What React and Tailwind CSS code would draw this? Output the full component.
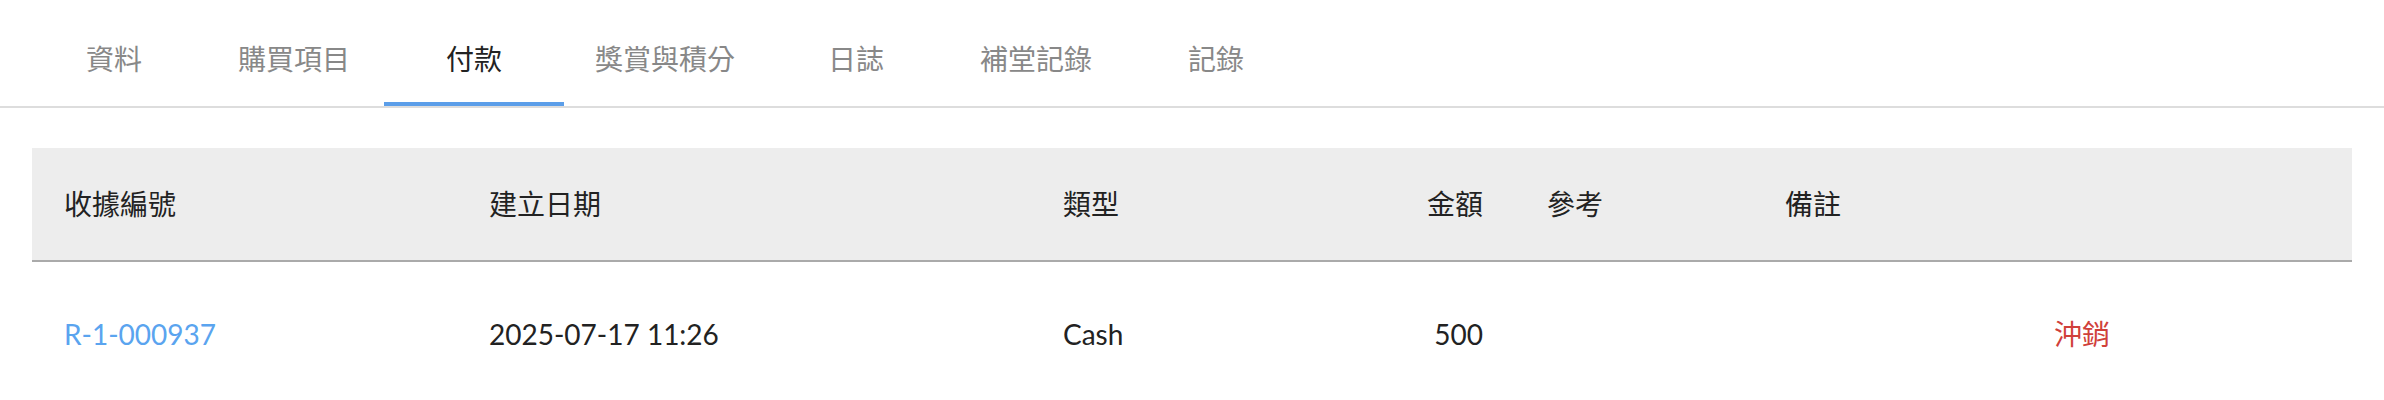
import React from "react";

const tabs = ["資料", "購買項目", "付款", "獎賞與積分", "日誌", "補堂記錄", "記錄"];

export default function App() {
  return (
    <div
      className="w-[2384px] h-[400px] bg-white overflow-hidden"
      style={{ fontFamily: '"Lato", "Noto Sans CJK TC", sans-serif' }}
    >
      <div className="flex pl-[24px] h-[108px] border-b-2 border-[#dddddd]">
        {tabs.map((t, i) => (
          <div
            key={t}
            className={
              i === 2
                ? "min-w-[180px] px-[31px] h-[106px] flex items-center justify-center pt-[16px] border-b-4 border-[#5b9ee9] text-[28px] leading-[38px] text-[#222222]"
                : "min-w-[180px] px-[31px] h-[106px] flex items-center justify-center pt-[16px] border-b-4 border-transparent text-[28px] leading-[38px] text-[#888888]"
            }
          >
            {t}
          </div>
        ))}
      </div>
      <div className="px-[32px] pt-[40px]">
        <div className="grid grid-cols-[425px_574px_319px_165px_238px_269px_1fr] h-[114px] items-center bg-[#ededed] border-b-2 border-[#aaaaaa] text-[28px] font-normal text-[#222222]">
          <div className="pl-[32px]">收據編號</div>
          <div className="pl-[32px]">建立日期</div>
          <div className="pl-[32px]">類型</div>
          <div className="pr-[32px] text-right">金額</div>
          <div className="pl-[32px]">參考</div>
          <div className="pl-[32px]">備註</div>
          <div className="pl-[32px]"></div>
        </div>
        <div className="grid grid-cols-[425px_574px_319px_165px_238px_269px_1fr] h-[144px] items-center text-[28px] text-[#222222]">
          <div className="pl-[32px] text-[#5aa4ef]">R-1-000937</div>
          <div className="pl-[32px]">2025-07-17 11:26</div>
          <div className="pl-[32px]">Cash</div>
          <div className="pr-[32px] text-right">500</div>
          <div className="pl-[32px]"></div>
          <div className="pl-[32px]"></div>
          <div className="pl-[32px] text-[#d0403a]">沖銷</div>
        </div>
      </div>
    </div>
  );
}
